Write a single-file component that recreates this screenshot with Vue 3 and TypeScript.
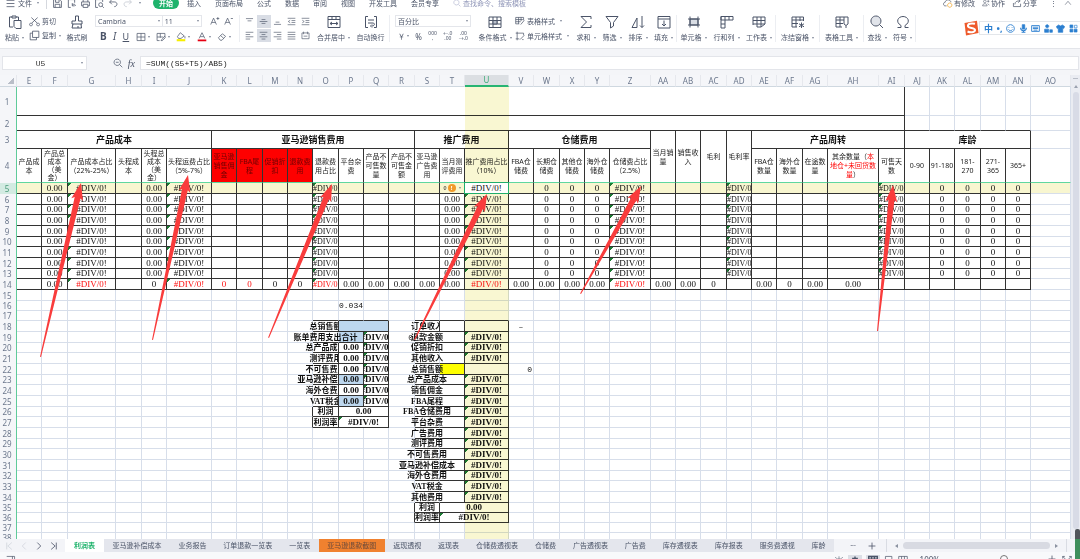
<script setup lang="ts">
import { h } from 'vue'

interface Part { d: string; fill?: string; stroke?: string; w?: number }

const icons: Record<string, Part[]> = {
  menu: [{ d: 'M2 3H12M2 7H12M2 11H12' }],
  save: [{ d: 'M2 2H10L12 4V12H2ZM4.500 2V5.500H9V2M4 12V8H10V12' }],
  export: [{ d: 'M6 12H3V2H11V6M8 9C10 7 12 8 12 10M8 6.500V10H11' }],
  print: [{ d: 'M4 5V2H10V5M4 10H2V5H12V10H10M4 8H10V12H4Z' }],
  preview: [{ d: 'M5 12H2V2H11V5M8.500 6A2.500 2.500 0 1 1 8.500 11A2.500 2.500 0 1 1 8.500 6M10.500 10.500L12.500 12.500' }],
  undo: [{ d: 'M5 2L2 5L5 8M2 5H8C13 5 12 11 8 11' }],
  redo: [{ d: 'M9 2L12 5L9 8M12 5H6C1 5 2 11 6 11', stroke: '#c3c8d1' }],
  paste: [{ d: 'M5 12H1.500V2H4M8 2H10.500V5M4 1H8V3H4ZM6 5.500H13V13.500H8L6 11.500Z' }],
  cut: [{ d: 'M3 2L10.500 9M11 2L3.500 9M2.500 9A1.800 1.800 0 1 0 2.600 9M11.500 9A1.800 1.800 0 1 0 11.600 9' }],
  copy: [{ d: 'M4.500 1.500H12.500V9.500H4.500ZM4.500 4H1.500V12.500H9.500V9.500' }],
  brush: [{ d: 'M5.500 1H8.500V6H12V9H2V6H5.500ZM3 9L2 13H11.500L11 9M8 11V13' }],
  bigA: [{ d: 'M1 12L5 3L9 12M2.500 9H7.500M9 3.500H13M11 1.500V5.500' }],
  smallA: [{ d: 'M1 12L5 3L9 12M2.500 9H7.500M9.500 3.500H12.500' }],
  border: [{ d: 'M1.500 2H12.500V12H1.500ZM7 2V12M1.500 7H12.500' }],
  cell: [{ d: 'M1.500 2H12.500V7M1.500 2V12H5M1.500 7H10M6 2V8M7 12L12 6L13 8L9 12Z' }],
  fill: [{ d: 'M6 1L11.500 5.500L7 9H3.500L2 6.500ZM12.500 6V9' }, { d: 'M1 10H13V13H1Z', fill: '#f6ee00', stroke: 'none' }],
  color: [{ d: 'M3 9L7 1L11 9M4.500 6.500H9.500' }, { d: 'M1 10.500H13V13H1Z', fill: '#e60012', stroke: 'none' }],
  erase: [{ d: 'M2 8L7.500 2.500L12 6L7 11.500H4.500ZM5 5L9.500 9' }],
  top: [{ d: 'M1.500 2.500H12.500M4 6H10' }],
  middle: [{ d: 'M1 7H13M4 4H10M4 10H10' }],
  bottom: [{ d: 'M1.500 11.500H12.500M4 8H10' }],
  outdent: [{ d: 'M1 2H13M7 5.500H13M7 8.500H13M1 12H13M5 5L2 7L5 9' }],
  indent: [{ d: 'M1 2H13M7 5.500H13M7 8.500H13M1 12H13M2 5L5 7L2 9' }],
  left: [{ d: 'M1 2H13M1 5.500H8M1 9H13M1 12.500H8' }],
  center: [{ d: 'M1 2H13M4 5.500H10M1 9H13M4 12.500H10' }],
  right: [{ d: 'M1 2H13M6 5.500H13M1 9H13M6 12.500H13' }],
  justify: [{ d: 'M1 2H13M1 5.500H13M1 9H13M1 12.500H13' }],
  spread: [{ d: 'M1.500 3H12.500V12H1.500ZM4 1V5M10 1V5M4 8H10' }],
  merge: [{ d: 'M1 1.500H13V12.500H1ZM1 4.500H13M5 1.500V4.500M9 1.500V4.500M3 8.500H11M5 7L3 8.500L5 10M9 7L11 8.500L9 10' }],
  wrap: [{ d: 'M4 1.500H1.500V12.500H4M10 1.500H12.500V12.500H10M4 5H10M4 8H9C11 8 11 11 8 11M8 9.500L6.500 11L8 12.500' }],
  cond: [{ d: 'M1 2H13V12.500H1ZM1 5.500H13M1 9H13M5 2V12.500M9 2V9' }, { d: 'M5 5.500H9V9H5Z', fill: '#b9c0cc' }],
  tstyle: [{ d: 'M1 2H12V6M1 2V11H6M1 5H11M1 8H8M5 2V11M8.500 2V7M8 12L13 6' }],
  cstyle: [{ d: 'M3 1V13M1 3H12V6M1 11H6M7 12L13 6M10 12H12' }],
  sum: [{ d: 'M12 4V1.500H2L7.500 7L2 12.500H12V10' }],
  filter: [{ d: 'M1 1.500H13L8.500 7.500V11L5.500 13V7.500Z' }],
  sort: [{ d: 'M1 12.500L6 3V12.500ZM11 1V12.500M9 10.500L11 12.500L13 10.500' }],
  down: [{ d: 'M1 1.500H13V13H1ZM1 4H13M7 5.500V11M5 9L7 11L9 9' }],
  cells: [{ d: 'M3 4H11V10H3Z', fill: '#d9dde4' }, { d: 'M3 1.500V12.500M11 1.500V12.500M1 4H13M1 10H13' }],
  rows: [{ d: 'M1 1.500H13V5H1ZM5 1.500V13H1V1.500M1 9H5M9 1.500V5' }],
  sheet: [{ d: 'M1 2H13V9H1ZM1 5.500H13M5 2V12H9V2M1 9V10M9 12L13 9' }],
  freeze: [{ d: 'M1 12H6M1 2H12.500V6M1 2V12M1 5H12.500M1 8.500H7M5 2V12M9 2V6M10.500 7.500V13M8 8.800L13 11.800M13 8.800L8 11.800' }],
  tools: [{ d: 'M1 2H13V6M1 2V12H7M1 5H9M1 8.500H8M5 2V12M9 2V6M9 6V9L11 10.500L13 9V6M11 10.500V13' }],
  find: [{ d: 'M6 1A5 5 0 1 1 5.900 1', fill: '#e1e4ea' }, { d: 'M9.700 9.700L13 13' }],
  omega: [{ d: 'M1.500 12.500H5V10.500C-1 7 2 1.500 7 1.500S15 7 9 10.500V12.500H12.500' }],
  zoom: [{ d: 'M6 1.500A4.500 4.500 0 1 1 5.900 1.500M9.500 9.500L13 13M4 6H8' }],
  search: [{ d: 'M6 1.500A4.500 4.500 0 1 1 5.900 1.500M9.500 9.500L13 13', stroke: '#a5abc8' }],
  cloud: [{ d: 'M5 11H3C0 11 0 6 3 6C4 1 11 2 11 6' }, { d: 'M9.500 7A3 3 0 1 1 9.400 7', stroke: '#f0a020' }],
  people: [{ d: 'M5 2A2.300 2.300 0 1 1 4.900 2M1 12C1 7 9 7 9 12ZM9 4H13M11 2V6M10 8L13 11' }],
  share: [{ d: 'M2 7V12H12V8M4 9C4 5 7 4 11 4M8.500 1.500L11.500 4L8.500 6.500' }],
  first: [{ d: 'M3 1V13M12 1L5 7L12 13', stroke: '#c3c8d1' }],
  prev: [{ d: 'M10 1L4 7L10 13', stroke: '#c3c8d1' }],
  next: [{ d: 'M4 1L10 7L4 13', w: 1.4 }],
  last: [{ d: 'M11 1V13M2 1L9 7L2 13', w: 1.4 }],
  plus: [{ d: 'M7 1V13M1 7H13', w: 1.4 }],
  up: [{ d: 'M2 10L7 4L12 10' }],
  page: [{ d: 'M1 2H12V10H7M9 2V12H5' }],
  eye: [{ d: 'M1 9C4 4 10 4 13 9M7 7A2 2 0 1 1 6.900 7M7 2V4M2 3L3.500 5M12 3L10.500 5' }],
  cross: [{ d: 'M1 8H13M7 2V13M4 5H10V11H4Z', w: 2 }],
  grid: [{ d: 'M1 2H13V13H1ZM1 6H13M5 2V13M9 2V13', w: 2 }],
  book: [{ d: 'M1 2H13V13H1ZM5 2V13M9 2V13' }],
  doc: [{ d: 'M2 2H11V7H7V13M2 2V13' }],
  full: [{ d: 'M1 5V2H4M10 2H13V5M1 2L5 6M13 2L9 6' }],
  smile: [{ d: 'M7 1A6 6 0 1 1 6.900 1M4.500 5V6M9.500 5V6M4 8.500C5 11 9 11 10 8.500', stroke: '#2b7fd0', w: 1.4 }],
  mic: [{ d: 'M5 1H9V8H5Z', fill: '#2b7fd0', stroke: '#2b7fd0' }, { d: 'M2.500 6C2.500 12 11.500 12 11.500 6M7 10V13M4 13H10', stroke: '#2b7fd0', w: 1.6 }],
  keys: [{ d: 'M1 2.500H13V11.500H1ZM3 5H11M3 7H11M4 9.500H10', stroke: '#2b7fd0', w: 1.4 }],
  user: [{ d: 'M5 1A2.500 2.500 0 1 1 4.900 1ZM1 13V8H7V13ZM9 9H13V13H9Z', fill: '#2b7fd0', stroke: '#2b7fd0' }],
  shirt: [{ d: 'M4 1.500L7 3L10 1.500L13.500 4L12 7L10.500 6V13H3.500V6L2 7L.500 4Z', fill: '#2b7fd0', stroke: '#2b7fd0' }],
  apps: [{ d: 'M1.500 1.500H6V6H1.500ZM1.500 8H6V12.500H1.500ZM8 8H12.500V12.500H8Z', fill: '#2b7fd0', stroke: '#2b7fd0' }, { d: 'M8.500 2H12.500V6H8.500Z', stroke: '#2b7fd0' }],
}

const Icon = (props: { n: string }) =>
  h('svg', { viewBox: '0 0 14 14', 'aria-hidden': 'true' },
    icons[props.n].map(p => h('path', { d: p.d, fill: p.fill ?? 'none', stroke: p.stroke ?? 'currentColor', 'stroke-width': p.w ?? 1 })))
Icon.props = ['n']

const quick = ['save', 'export', 'print', 'preview', 'undo', 'redo']
const menuTabs = ['插入', '页面布局', '公式', '数据', '审阅', '视图', '开发工具', '会员专享']
const mergeButtons = [{ i: 'merge', t: '合并居中', c: true }, { i: 'wrap', t: '自动换行', c: false }]
const bigButtons = [
  { i: 'sum', t: '求和' }, { i: 'filter', t: '筛选' }, { i: 'sort', t: '排序' }, { i: 'down', t: '填充', s: true },
  { i: 'cells', t: '单元格' }, { i: 'rows', t: '行和列' }, { i: 'sheet', t: '工作表', s: true },
  { i: 'freeze', t: '冻结窗格', s: true }, { i: 'tools', t: '表格工具', s: true },
  { i: 'find', t: '查找' }, { i: 'omega', t: '符号', s: true },
]
const alignRows = [['top', 'middle', 'bottom', 'outdent', 'indent'], ['left', 'center', 'right', 'justify', 'spread']]
const sheetTabs = ['亚马逊补偿成本', '业务报告', '订单退款一览表', '一览表', '亚马逊退款截图', '返现透视', '返现表', '仓储费透视表', '仓储费', '广告透视表', '广告费', '库存透视表', '库存报表', '服务费透视', '库龄']

const names = ['E', 'F', 'G', 'H', 'I', 'J', 'K', 'L', 'M', 'N', 'O', 'P', 'Q', 'R', 'S', 'T', 'U', 'V', 'W', 'X', 'Y', 'Z', 'AA', 'AB', 'AC', 'AD', 'AE', 'AF', 'AG', 'AH', 'AI', 'AJ', 'AK', 'AL', 'AM', 'AN', 'AO']
const widths = [25, 26, 48, 26, 25, 45, 25, 26, 25, 25, 26, 25, 25, 26, 25, 25, 44, 25, 26, 25, 25, 41, 25, 25, 26, 25, 25, 26, 25, 51, 26, 25, 25, 26, 25, 25]
const at = (name: string) => names.indexOf(name)

const rowHeight = (r: number): number => {
  const head = [29, 15, 18, 34]
  if (r <= 4) return head[r - 1]
  if (r <= 14) return (r - 5) % 3 === 2 ? 10 : 11
  if (r === 15) return 11
  if (r <= 17) return 10
  if (r <= 34) return (r - 18) % 3 === 2 ? 10 : 11
  return 10
}

interface Cell { t: string; c: string[]; cs: number; rs: number; red?: string[] }
const content: Record<string, Partial<Cell>> = {}
const put = (key: string, t: string, c = '', cs = 1, rs = 1) => {
  content[key] = { t, c: c.split(' '), cs, rs }
}
const err = '#DIV/0!'

put('E1', '', '', 31)
put('E2', '', '', 31)
put('E3', '产品成本', 'title', 6)
put('K3', '亚马逊销售费用', 'title', 8)
put('S3', '推广费用', 'title', 3)
put('V3', '仓储费用', 'title', 5)
put('AA3', '当月销\n量', 'head', 1, 2)
put('AB3', '销售收\n入', 'head', 1, 2)
put('AC3', '毛利', 'head', 1, 2)
put('AD3', '毛利率', 'head', 1, 2)
put('AE3', '产品周转', 'title', 5)
put('AJ3', '库龄', 'title', 5)

const heads: Record<string, string> = {
  E: '产品成\n本', F: '产品总\n成本\n（美\n金）', G: '产品成本占比\n（22%-25%）', H: '头程成\n本', I: '头程总\n成本\n（美\n金）', J: '头程运费占比\n（5%-7%）',
  K: '亚马逊\n销售佣\n金', L: 'FBA尾\n程', M: '促销折\n扣', N: '退款费\n用', O: '退款费\n用占比', P: '平台杂\n费', Q: '产品不\n可售数\n量', R: '产品不\n可售金\n额',
  S: '亚马逊\n广告费\n用', T: '当月测\n评费用', U: '推广费用占比\n（10%）', V: 'FBA仓\n储费', W: '长期仓\n储费', X: '其他仓\n储费', Y: '海外仓\n储费', Z: '仓储费占比\n（2.5%）',
  AE: 'FBA仓\n数量', AF: '海外仓\n数量', AG: '在途数\n量', AI: '可售天\n数', AJ: '0-90', AK: '91-180', AL: '181-\n270', AM: '271-\n365', AN: '365+',
}
for (const k in heads) {
  const extra = 'KLMN'.includes(k) ? ' alert' : heads[k].split('\n').length > 3 ? ' tight' : ''
  put(k + '4', heads[k], 'head' + extra)
}
put('AH4', '其余数量（', 'head')
content.AH4.red = ['本\n地仓+未回货数\n量', '）']

for (let r = 5; r <= 13; r++) {
  for (const k of ['F', 'I', 'T']) put(k + r, '0.00', 'num')
  for (const k of ['W', 'X', 'Y', 'AK', 'AL', 'AM', 'AN']) put(k + r, '0', 'num')
  for (const k of ['G', 'J', 'U', 'Z']) put(k + r, err, 'num flag crop')
  for (const k of ['O', 'AD', 'AI']) put(k + r, err, 'num flag crop narrow')
}
put('T5', '', 'num')
for (const k of ['G', 'J', 'O', 'U', 'Z']) put(k + '14', err, 'num red crop' + (k === 'U' ? '' : ' flag') + (k === 'O' ? ' narrow' : ''))
for (const k of ['K', 'L']) put(k + '14', '0', 'num red')
for (const k of ['I', 'M', 'N', 'AC', 'AF']) put(k + '14', '0', 'num')
for (const k of ['F', 'P', 'Q', 'R', 'S', 'T', 'V', 'W', 'X', 'Y', 'AA', 'AB', 'AE', 'AG', 'AH']) put(k + '14', '0.00', 'num')

put('P16', '0.034', 'mono')
put('R19', '0', 'mono end')
put('V18', '–', 'mono')
put('V22', '0', 'mono end')

const leftLabels = ['总销售额', '账单费用支出合计', '总产品成本', '测评费用', '不可售费用', '亚马逊补偿成本', '海外仓费用', 'VAT税金']
leftLabels.forEach((t, i) => {
  const r = 18 + i
  put('O' + r, t, r === 19 ? 'label' : 'label cut')
  if (r > 19) put('P' + r, '0.00', 'num strong' + (r === 23 || r === 25 ? ' blue' : ''))
  if (r > 18) put('Q' + r, err, 'num strong flag crop')
})
put('P18', '', 'blue', 2)
put('P19', '', 'blue')
put('O26', '利润', 'label')
put('P26', '0.00', 'num strong', 2)
put('O27', '利润率', 'label')
put('P27', err, 'num strong flag', 2)

const rightLabels = ['订单收入', '退款金额', '促销折扣', '其他收入', '总销售额', '总产品成本', '销售佣金', 'FBA尾程', 'FBA仓储费用', '平台杂费', '广告费用', '测评费用', '不可售费用', '亚马逊补偿成本', '海外仓费用', 'VAT税金', '其他费用']
rightLabels.forEach((t, i) => {
  const r = 18 + i
  put('S' + r, t, r === 18 ? 'label cut' : 'label')
  if (r !== 18 && r !== 22) put('U' + r, err, 'num strong flag')
})
put('T22', '', 'yellow')
put('S35', '利润', 'label')
put('T35', '0.00', 'num strong', 2)
put('S36', '利润率', 'label')
put('T36', err, 'num strong flag', 2)

const last = at('AN')
const darkBottom = (r: number, c: number): boolean => {
  const n = names[c]
  if (r === 1) return c <= at('AI')
  if (r <= 14) return c <= last && r !== 4
  if (r >= 17 && r <= 27 && ['O', 'P', 'Q'].includes(n)) return true
  return r >= 17 && r <= 36 && ['S', 'T', 'U'].includes(n)
}
const darkRight = (r: number, c: number): boolean => {
  const n = names[c]
  if (r <= 2) return n === 'AI'
  if (r <= 14) return c <= last
  if (r >= 18 && r <= 27 && ['O', 'P', 'Q'].includes(n)) return r !== 19 || n !== 'O'
  if ((r === 26 || r === 27) && n === 'N') return true
  if (r >= 18 && r <= 34) return n === 'T' || n === 'U' || (r === 18 && n === 'S')
  return (r === 35 || r === 36) && ['R', 'S', 'U'].includes(n)
}

interface Placed extends Cell { key: string }
const covered = new Set<string>()
const rows = Array.from({ length: 38 }, (_, i) => {
  const r = i + 1
  const cells: Placed[] = []
  names.forEach((n, c) => {
    if (covered.has(n + r)) return
    const s = content[n + r]
    const cs = s?.cs ?? 1
    const rs = s?.rs ?? 1
    for (let a = 0; a < rs; a++) for (let b = 0; b < cs; b++) if (a || b) covered.add(names[c + b] + (r + a))
    const cls = [...(s?.c ?? [])]
    const endRow = r + rs - 1
    if (darkBottom(endRow, c)) cls.push('db')
    if (endRow === 4) cls.push('green')
    if (darkRight(r, c + cs - 1)) cls.push('dr')
    if (r === 5) cls.push('current')
    cells.push({ key: n + r, t: s?.t ?? '', c: cls, cs, rs, red: s?.red })
  })
  return { r, height: rowHeight(r), cells }
})

const arrow = (x1: number, y1: number, x2: number, y2: number): string => {
  const len = Math.hypot(x2 - x1, y2 - y1)
  const ux = (x2 - x1) / len
  const uy = (y2 - y1) / len
  const p = (back: number, side: number) => `${(x2 - ux * back - uy * side).toFixed(1)},${(y2 - uy * back + ux * side).toFixed(1)}`
  return [p(0, 0), p(17, 6), p(15, 3), p(len, 0), p(len, -1), p(15, -3), p(17, -6)].join(' ')
}
const arrows = [
  arrow(41, 282, 81, 108), arrow(153, 265, 188, 100), arrow(269, 263, 332, 109),
  arrow(415, 265, 487, 119), arrow(581, 219, 641, 111), arrow(878, 256, 893, 110),
]
</script>

<template>
  <div class="app">
    <nav class="menu" aria-label="菜单">
      <button class="item file"><Icon n="menu" class="i11" />文件<i class="caret"></i></button>
      <div class="quick">
        <button v-for="q in quick" :key="q" :aria-label="q"><Icon :n="q" class="i11" /></button>
        <i class="caret"></i>
      </div>
      <button class="start">开始</button>
      <div class="tabs"><button v-for="t in menuTabs" :key="t">{{ t }}</button></div>
      <label class="find"><Icon n="search" class="i8" /><input placeholder="查找命令、搜索模板" aria-label="查找命令" /></label>
      <div class="account">
        <button><Icon n="cloud" class="i10" />有修改</button>
        <button><Icon n="people" class="i8" />协作</button>
        <button><Icon n="share" class="i10" />分享</button>
        <button class="more" aria-label="更多">⋮</button>
        <button aria-label="收起"><Icon n="up" class="i8" /></button>
      </div>
    </nav>

    <div class="ribbon">
      <button class="big paste"><Icon n="paste" class="i14" /><span>粘贴<i class="caret"></i></span></button>
      <div class="stack clip">
        <button><Icon n="cut" class="i11" />剪切</button>
        <button><Icon n="copy" class="i11" />复制<i class="caret"></i></button>
      </div>
      <button class="big brush"><Icon n="brush" class="i14" /><span>格式刷</span></button>
      <div class="stack font">
        <div class="line">
          <div class="box name"><select aria-label="字体"><option>Cambria</option></select><i class="caret"></i></div>
          <div class="box size"><select aria-label="字号"><option>11</option></select><i class="caret"></i></div>
          <button class="grow" aria-label="增大字号"><Icon n="bigA" class="i10" /></button>
          <button aria-label="减小字号"><Icon n="smallA" class="i10" /></button>
        </div>
        <div class="line spread">
          <button class="b">B</button><button class="it">I</button><button class="u">U</button>
          <button v-for="n in ['border', 'cell', 'fill', 'color', 'erase']" :key="n" :aria-label="n"><Icon :n="n" class="i10" /><i class="caret"></i></button>
        </div>
      </div>
      <div class="stack align">
        <div v-for="(g, gi) in alignRows" :key="gi" class="line">
          <button v-for="(n, ni) in g" :key="n" :aria-label="n" :class="{ on: ni === 1 }"><Icon :n="n" class="i9" /></button>
        </div>
      </div>
      <button v-for="m in mergeButtons" :key="m.t" class="big wide"><Icon :n="m.i" class="i14" /><span>{{ m.t }}<i v-if="m.c" class="caret"></i></span></button>
      <div class="stack number">
        <div class="box"><select aria-label="数字格式"><option>百分比</option></select><i class="caret"></i></div>
        <div class="line spread">
          <button>￥<i class="caret"></i></button><button class="pct">%</button>
          <button class="dec">000<br />,</button><button class="dec">←.0<br />.00</button><button class="dec">.00<br />→.0</button>
        </div>
      </div>
      <button class="big cond"><Icon n="cond" class="i14" /><span>条件格式<i class="caret"></i></span></button>
      <div class="stack styles">
        <button><Icon n="tstyle" class="i10" />表格样式<i class="caret"></i></button>
        <button><Icon n="cstyle" class="i10" />单元格样式<i class="caret"></i></button>
      </div>
      <button v-for="b in bigButtons" :key="b.t" :class="['big', 'n' + b.t.length, { sep: b.s }]"><Icon :n="b.i" class="i14" /><span>{{ b.t }}<i class="caret"></i></span></button>
      <div class="ime">
        <svg class="logo" viewBox="0 0 16 16" aria-hidden="true"><path d="M1.500 3L14 .800L15.500 13L3 15.500Z" fill="#ee5a2b" /><path d="M12 3.800C8 2.800 4.500 4 5 6.200S12 7.500 12 10S7.500 12.800 4.500 11.500" fill="none" stroke="#fff" stroke-width="2" /></svg>
        <div class="imebar">
          <b>中</b><b>•,</b>
          <Icon v-for="n in ['smile', 'mic', 'keys', 'user', 'shirt', 'apps']" :key="n" :n="n" class="i9" />
        </div>
      </div>
    </div>

    <div class="formula">
      <div class="namebox"><input value="U5" aria-label="名称框" /><i class="caret"></i></div>
      <div class="fx"><Icon n="zoom" class="i10" /><em>fx</em></div>
      <input class="expr" value="=SUM((S5+T5)/AB5)" aria-label="编辑栏" />
    </div>

    <main class="area">
      <div class="sheet">
        <table>
          <colgroup><col class="rowcol" /><col v-for="(w, i) in widths" :key="i" :style="{ width: w + 'px' }" /><col /></colgroup>
          <thead>
            <tr><th class="corner"><i></i></th><th v-for="n in names" :key="n" :class="{ active: n === 'U' }">{{ n }}</th></tr>
          </thead>
          <tbody>
            <tr v-for="row in rows" :key="row.r" :style="{ height: row.height + 'px' }">
              <th :class="{ active: row.r === 5 }"><span>{{ row.r }}</span></th>
              <td v-for="cell in row.cells" :key="cell.key" :class="cell.c" :colspan="cell.cs" :rowspan="cell.rs">
                <div v-if="cell.key === 'T5'" class="warn"><small>0</small><b>!</b><i class="caret"></i></div>
                <div v-else-if="cell.key === 'U5'" class="picked">{{ cell.t }}</div>
                <div v-else-if="cell.t" class="in"><span>{{ cell.t }}<em v-if="cell.red">{{ cell.red[0] }}</em>{{ cell.red ? cell.red[1] : '' }}</span></div>
              </td>
            </tr>
          </tbody>
        </table>
        <div class="column-mark"></div>
        <svg class="arrows" aria-hidden="true"><polygon v-for="(a, i) in arrows" :key="i" :points="a" /></svg>
      </div>
      <div class="vscroll"><i class="split"></i><i class="tri"></i><i class="thumb"></i><i class="dock"></i></div>
    </main>

    <footer class="tabsbar">
      <div class="navs"><button v-for="n in ['first', 'prev', 'next', 'last']" :key="n" :aria-label="n"><Icon :n="n" class="i8" /></button></div>
      <button class="sel">利润表</button>
      <div class="others"><button v-for="(t, i) in sheetTabs" :key="t" :class="{ orange: i === 4 }">{{ t }}</button></div>
      <button class="dots" aria-label="更多工作表">···</button>
      <button aria-label="新建工作表"><Icon n="plus" class="i8" /></button>
      <div class="hscroll"><i class="l"></i><i class="bar"></i><i class="r"></i></div>
    </footer>
    <div class="status">
      <Icon n="page" class="i10" />
      <div class="views">
        <Icon n="eye" class="i10" /><span class="hl"><Icon n="cross" class="i10" /></span><span class="hl"><Icon n="grid" class="i10" /></span>
        <Icon n="doc" class="i10" /><Icon n="book" class="i10" />
      </div>
      <span class="pc">100%</span><i class="knob"></i><Icon n="plus" class="i8" /><Icon n="full" class="i10" />
    </div>
  </div>
</template>

<style>
html, body { margin: 0; height: 100%; overflow: hidden; }
#app { height: 100%; }
</style>

<style scoped>
.app { height: 100vh; display: flex; flex-direction: column; overflow: hidden; background: #fff; color: #4b5468; font: 7px/9px "Noto Sans", "Noto Sans CJK SC", sans-serif; }
.app * { box-sizing: border-box; }
button, select, input { font: inherit; color: inherit; background: none; border: 0; padding: 0; margin: 0; min-width: 0; outline: 0; }
button { display: inline-flex; align-items: center; justify-content: center; white-space: nowrap; flex: none; }
select { appearance: none; }
svg { flex: none; display: block; }
.i8 { width: 8px; height: 8px; }
.i9 { width: 9px; height: 9px; }
.i10 { width: 10px; height: 10px; }
.i11 { width: 11px; height: 11px; }
.i14 { width: 14px; height: 14px; }
.caret { display: inline-block; flex: none; width: 0; height: 0; border: 1px solid transparent; border-top: 2px solid #7d8596; border-bottom: 0; margin-left: 3px; vertical-align: middle; }

.menu { height: 14px; margin-top: -4px; flex: none; display: flex; align-items: center; padding: 0 8px 0 5px; }
.file { gap: 2px; padding-right: 7px; border-right: 1px solid #d5d8de; }
.quick { display: flex; align-items: center; gap: 3px; padding-left: 5px; width: 106px; flex: none; }
.start { background: #1fb36c; color: #fff; font-weight: 700; border-radius: 6px; width: 26px; height: 12px; }
.tabs { display: flex; gap: 14px; padding-left: 8px; }
.find { display: flex; align-items: center; gap: 2px; margin-left: 14px; flex: 1; }
.find input { width: 80px; }
.find input::placeholder { color: #9096b8; opacity: 1; }
.account { display: flex; gap: 7px; align-items: center; }
.account button { gap: 1px; }
.account .more { width: 4px; margin: 0 2px 0 7px; }

.ribbon { flex: none; height: 39px; display: flex; padding: 5px 0 7px; border-bottom: 1px solid #e3e5ea; }
.big { flex-direction: column; gap: 4px; height: 27px; }
.paste { width: 29px; }
.stack { display: flex; flex-direction: column; justify-content: space-between; height: 27px; flex: none; }
.line { display: flex; align-items: center; }
.spread { justify-content: space-between; }
.clip { width: 34px; align-items: flex-start; padding: 1px 0; }
.clip button { gap: 2px; height: 11px; }
.clip .caret { margin-left: 1px; }
.brush { width: 28px; }
.font { width: 148px; padding: 0 5px 0 4px; }
.box { display: flex; align-items: center; height: 12px; border: 1px solid #e4e6eb; padding: 0 2px; }
.box select { flex: 1; }
.name { width: 69px; }
.size { width: 40px; border-left: 0; }
.font .spread { padding: 0 3px 0 5px; height: 11px; }
.grow { margin: 0 4px 0 8px; }
.b { font-weight: 700; font-size: 10px; }
.it { font-style: italic; font-size: 10px; }
.u { text-decoration: underline; font-size: 9px; }
.font .caret, .number .caret { margin-left: 2px; }
.align { width: 76px; align-items: center; border-left: 1px solid #eceef2; }
.align .line button { width: 14px; height: 13px; }
.on { background: #d9dde5; }
.wide { width: 37px; }
.number { width: 86px; padding: 0 4px 0 5px; border-left: 1px solid #eceef2; }
.number .spread { height: 12px; padding: 0 3px; }
.pct { font-size: 8px; }
.dec { font-size: 5px; line-height: 5px; }
.cond { width: 40px; }
.styles { width: 58px; align-items: flex-start; }
.styles button { gap: 2px; height: 12px; }
.n2 { width: 26px; }
.n3 { width: 33px; }
.n4 { width: 44px; }
.sep { border-right: 1px solid #eceef2; }
.ime { flex: 1; display: flex; align-items: center; justify-content: flex-end; min-width: 0; }
.logo { width: 16px; height: 16px; }
.imebar { display: flex; align-items: center; justify-content: space-between; height: 14px; width: 101px; border: 1px solid #e3e6ea; border-right: 0; padding: 0 2px 0 4px; color: #2b7fd0; }
.imebar b { font-size: 9px; }

.formula { flex: none; height: 26px; display: flex; padding: 7px 1px 5px 2px; background: #f4f5f8; }
.namebox { width: 85px; border: 1px solid #e3e5ea; background: #fff; display: flex; align-items: center; padding-right: 3px; }
.namebox input { flex: 1; width: 40px; text-align: center; font: 8px "Liberation Mono", monospace; color: #333; }
.fx { width: 53px; display: flex; align-items: center; justify-content: flex-end; gap: 5px; padding-right: 5px; }
.fx em { font: italic 10px "Liberation Serif", serif; }
.expr { flex: 1; border: 1px solid #e3e5ea; background: #fff; padding-left: 5px; font: 8px "Liberation Mono", monospace; color: #222; }

.area { flex: 1; min-height: 0; display: flex; }
.sheet { flex: 1; min-width: 0; position: relative; overflow: hidden; }
table { width: 100%; table-layout: fixed; border-collapse: separate; border-spacing: 0; }
.rowcol { width: 17px; }
th { padding: 0; font-weight: 400; font-size: 8px; line-height: 8px; color: #6c788d; background: #f5f6f9; overflow: hidden; white-space: nowrap; }
thead th { height: 12px; border-right: 1px solid #e6e8ed; border-bottom: 1px solid #cfd8e0; }
thead .active { background: #dcdfe3; color: #3cab78; border-bottom: 2px solid #28b472; }
.corner i { display: block; margin-left: 8px; width: 6px; height: 6px; background: linear-gradient(135deg, transparent 50%, #b9bec8 50%); }
tbody th { border-right: 1px solid #5fcb9a; padding-right: 2px; }
tbody th span { display: block; }
tbody .active { background: #d3ebe2; color: #4a9b7a; }
td { padding: 0; border-right: 1px solid #d7deea; border-bottom: 1px solid #d7deea; color: #111; line-height: 9px; vertical-align: middle; }
.db { border-bottom-color: #333; }
.dr { border-right-color: #333; }
.green { border-bottom-color: #5fd79f; }
.in { display: flex; justify-content: center; white-space: pre; text-align: center; height: 9px; }
.title .in { font-size: 9px; font-weight: 700; line-height: 12px; height: 12px; }
.head .in { height: auto; }
.head { color: #222; }
.tight { line-height: 8px; }
.alert { background: #fe0000; color: #6e0000; }
.head em { font-style: normal; color: #f00; }
.num { font: 9px/9px "Liberation Serif", serif; }
.crop .in { overflow: hidden; }
.narrow { font-size: 8px; }
.narrow .in { justify-content: flex-start; }
.red { color: #f11; }
.strong { font-weight: 700; }
.mono { font: 8px/9px "Liberation Mono", monospace; }
.end .in { justify-content: flex-end; padding-right: 1px; }
.label { font: 700 8px/9px "Liberation Serif", "Noto Sans CJK SC", serif; }
.cut .in { clip-path: inset(0 0 0 -40px); }
.blue { background-color: #bdd7ee; }
.yellow { background-color: #ff0; }
.current { background-color: #f8f6d0; }
.flag { background-image: linear-gradient(135deg, #1b7a33 50%, transparent 50%); background-size: 4px 4px; background-repeat: no-repeat; }
.warn { display: flex; align-items: center; justify-content: center; gap: 1px; height: 9px; }
.warn small { font-size: 6px; }
.warn b { width: 8px; height: 8px; border-radius: 50%; background: #f09a2a; color: #fff; font: 700 6px/8px "Noto Sans", sans-serif; text-align: center; }
.warn .caret { margin-left: 2px; }
.picked { position: relative; z-index: 2; height: 10px; line-height: 10px; background: #fff; outline: 1px solid #1fae6c; text-align: center; }
.column-mark { position: absolute; left: 465px; top: 12px; bottom: 0; width: 44px; background: #f9f7d2; mix-blend-mode: multiply; z-index: 1; }
.arrows { position: absolute; inset: 0; width: 100%; height: 100%; z-index: 3; fill: #f93c3c; }
.vscroll { width: 9px; background: #eaecf2; display: flex; flex-direction: column; align-items: center; }
.split { width: 5px; height: 1px; background: #b9bec8; margin: 3px 0 6px; }
.tri { border: 2px solid transparent; border-bottom: 3px solid #9aa1af; border-top: 0; margin-bottom: 4px; }
.thumb { width: 6px; flex: 1; background: #d8dbe6; border-radius: 3px; }
.dock { width: 5px; height: 10px; background: #50555a; border-radius: 2px 2px 0 0; align-self: flex-end; }

.tabsbar { flex: none; height: 13px; display: flex; background: linear-gradient(#3f8f5c, #3f8f5c) right / 5px 100% no-repeat #f3f4f8; }
.tabsbar button { height: 13px; }
.navs { width: 65px; display: flex; gap: 7px; padding-left: 5px; }
.sel { width: 39px; background: #fff; color: #1fb36c; font-weight: 700; }
.others { width: 730px; display: flex; background: #e4e6ed; }
.others button { flex: 1 0 auto; padding: 0 8px; }
.others .orange { background: #f0812f; color: #6b4a3a; }
.dots { width: 34px; padding-left: 4px; }
.hscroll { flex: 1; display: flex; align-items: center; justify-content: space-between; margin: 0 13px 0 10px; padding: 0 8px; border: 1px solid #d9dce3; border-width: 0 1px; gap: 5px; }
.bar { flex: 1; height: 7px; background: #d8dae2; border-radius: 4px; }
.l { border: 2px solid transparent; border-right: 3px solid #8b92a1; border-left: 0; }
.r { border: 2px solid transparent; border-left: 3px solid #8b92a1; border-right: 0; }
.status { flex: none; height: 7px; display: flex; align-items: flex-start; overflow: hidden; padding: 3px 8px 0 6px; background: linear-gradient(#3f8f5c, #3f8f5c) right / 5px 100% no-repeat #f8f9fb; }
.views { margin-left: auto; display: flex; gap: 4px; }
.hl { background: #dcdfe6; padding: 0 2px; }
.pc { margin: 0 60px 0 12px; font-size: 8px; line-height: 9px; }
.knob { width: 8px; height: 8px; border: 1px solid #777; border-radius: 50%; margin-right: 40px; }
.status > svg:last-child { margin-left: 6px; }
</style>
